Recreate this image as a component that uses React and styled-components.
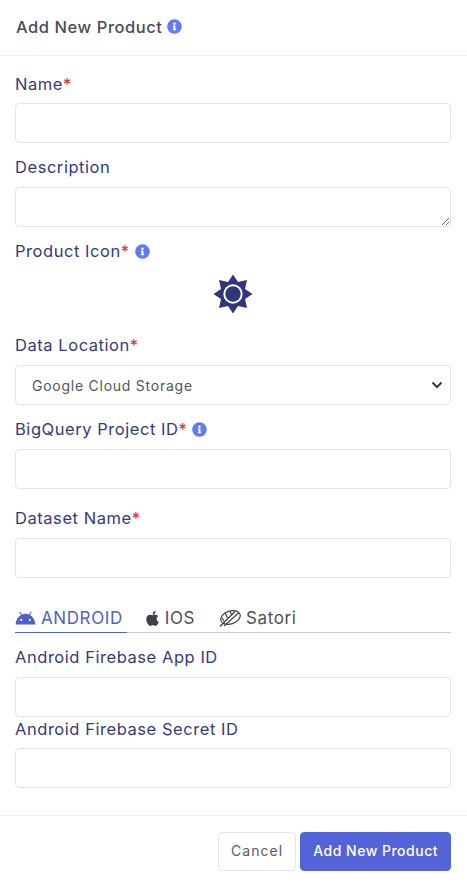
import styled, { createGlobalStyle } from "styled-components";
import { FaApple, FaInfoCircle } from "react-icons/fa";

const chevron =
  "data:image/svg+xml,%3Csvg xmlns='http://www.w3.org/2000/svg' width='12' height='8' viewBox='0 0 12 8'%3E%3Cpath d='M1.500 1.500L6 6l4.500-4.500' fill='none' stroke='%23343a40' stroke-width='2'/%3E%3C/svg%3E";

const GlobalStyle = createGlobalStyle`
  html, body {
    margin: 0;
    padding: 0;
    background: #fff;
  }
  body {
    font-family: Inter, "Open Sans", "Liberation Sans", sans-serif;
  }
  * {
    box-sizing: border-box;
  }
`;

const Modal = styled.div`
  width: 467px;
  height: 886px;
  display: flex;
  flex-direction: column;
  background: #fff;
  overflow: hidden;
`;

const Header = styled.header`
  height: 56px;
  flex: none;
  padding: 0 16px 2px;
  display: flex;
  align-items: center;
  gap: 5px;
  border-bottom: 1px solid #eeeff1;
`;

const Title = styled.h5`
  margin: 0;
  font-size: 16.5px;
  font-weight: 500;
  letter-spacing: 0.55px;
  color: #4b4b57;
`;

const Info = styled(FaInfoCircle)`
  width: 15px;
  height: 15px;
  color: #5f7cf0;
  flex: none;
`;

const Body = styled.div`
  flex: 1;
  padding: 17px 16px 0 15px;
`;

const Field = styled.div`
  margin-bottom: ${(p) => p.$gap ?? 13}px;
`;

const Label = styled.label`
  height: 22px;
  margin-bottom: ${(p) => p.$gap ?? 8}px;
  display: flex;
  align-items: center;
  gap: 5px;
  font-size: 16.5px;
  letter-spacing: 0.55px;
  color: #363a7d;
  white-space: nowrap;
`;

const Required = styled.span`
  color: #f0233b;
  margin-left: -5px;
`;

const Input = styled.input`
  display: block;
  width: 100%;
  height: 40px;
  border: 1px solid #e4e5e8;
  border-radius: 4px;
  background: #fff;
  outline: none;
`;

const TextArea = styled.textarea`
  display: block;
  width: 100%;
  height: 40px;
  border: 1px solid #e4e5e8;
  border-radius: 4px;
  background: #fff;
  outline: none;
`;

const Select = styled.select`
  display: block;
  width: 100%;
  height: 40px;
  padding-left: 16px;
  border: 1px solid #e4e5e8;
  border-radius: 4px;
  appearance: none;
  background: #fff url("${chevron}") no-repeat right 7px center;
  font-family: inherit;
  font-size: 14px;
  letter-spacing: 0.75px;
  color: #55555f;
  outline: none;
`;

const IconRow = styled.div`
  height: 40px;
  margin: 12px 0 20px;
  display: flex;
  justify-content: center;
  align-items: center;
`;

const Tabs = styled.div`
  display: flex;
  height: 30px;
  margin-bottom: 13px;
  border-bottom: 1px solid #c9cbd1;
`;

const Tab = styled.div`
  height: 30px;
  padding-right: ${(p) => p.$pad}px;
  margin-right: ${(p) => p.$space}px;
  display: flex;
  align-items: center;
  gap: ${(p) => p.$gap ?? 5}px;
  font-size: 17px;
  letter-spacing: 0.6px;
  color: ${(p) => (p.$active ? "#4f62c9" : "#4f4f58")};
  border-bottom: ${(p) => (p.$active ? "1px solid #4f62c9" : "none")};
`;

const Footer = styled.footer`
  height: 71px;
  flex: none;
  padding: 16px 16px 0;
  display: flex;
  justify-content: flex-end;
  align-items: flex-start;
  gap: 4px;
  border-top: 1px solid #eeeff1;
`;

const Button = styled.button`
  height: 39px;
  padding: 0 12px 2px;
  border-radius: 4px;
  border: 1px solid ${(p) => (p.$primary ? "#5563d8" : "#e4e5e8")};
  background: ${(p) => (p.$primary ? "#5563d8" : "#fff")};
  color: ${(p) => (p.$primary ? "#fff" : "#5a5a64")};
  font-family: inherit;
  font-size: 14px;
  letter-spacing: ${(p) => (p.$primary ? 0.5 : 1.05)}px;
  font-weight: ${(p) => (p.$primary ? 500 : 400)};
`;

const SunIcon = () => (
  <svg width="40" height="40" viewBox="0 0 40 40" aria-hidden="true">
    <polygon
      fill="#2f3779"
      points="20,0.5 25,8 34,6 32,15 39.5,20 32,25 34,34 25,32 20,39.5 15,32 6,34 8,25 0.5,20 8,15 6,6 15,8"
    />
    <circle cx="20" cy="20" r="9.7" fill="#fff" />
    <circle cx="20" cy="20" r="7.7" fill="#2f3779" />
  </svg>
);

const AndroidIcon = () => (
  <svg width="21" height="14" viewBox="0 0 21 14" aria-hidden="true">
    <path
      fill="#4f62c9"
      d="M0.5 13.5C1 8.6 3.2 5.4 6 3.9L4.3 1l.8-.5 1.8 3c1.1-.5 2.3-.7 3.6-.7s2.5.2 3.6.7l1.8-3 .8.5L15 3.9c2.8 1.5 5 4.7 5.5 9.6z"
    />
    <circle cx="6.2" cy="9" r="1.1" fill="#fff" />
    <circle cx="14.8" cy="9" r="1.1" fill="#fff" />
  </svg>
);

const SatoriIcon = () => (
  <svg width="22" height="20" viewBox="0 0 22 20" fill="none" stroke="#3f3f48" strokeWidth="1.2" aria-hidden="true">
    <ellipse cx="11.5" cy="9.5" rx="10" ry="6.5" transform="rotate(-18 11.500 9.500)" />
    <path d="M1 18.500L16 3.500M5 18L19.500 5" />
    <path d="M6 5l2.500 5M11 3.500l2 4M3 10l2 3" />
  </svg>
);

export default function App() {
  return (
    <>
      <GlobalStyle />
      <Modal>
        <Header>
          <Title>Add New Product</Title>
          <Info />
        </Header>
        <Body>
          <Field $gap={13}>
            <Label>
              Name<Required>*</Required>
            </Label>
            <Input />
          </Field>
          <Field $gap={13}>
            <Label $gap={9}>Description</Label>
            <TextArea />
          </Field>
          <Label>
            Product Icon<Required>*</Required>
            <Info />
          </Label>
          <IconRow>
            <SunIcon />
          </IconRow>
          <Field $gap={13}>
            <Label $gap={9}>
              Data Location<Required>*</Required>
            </Label>
            <Select defaultValue="gcs">
              <option value="gcs">Google Cloud Storage</option>
            </Select>
          </Field>
          <Field $gap={18}>
            <Label $gap={9}>
              BigQuery Project ID<Required>*</Required>
              <Info />
            </Label>
            <Input />
          </Field>
          <Field $gap={25}>
            <Label $gap={9}>
              Dataset Name<Required>*</Required>
            </Label>
            <Input />
          </Field>
          <Tabs>
            <Tab $active $pad={4} $space={17}>
              <AndroidIcon />
              ANDROID
            </Tab>
            <Tab $pad={0} $space={24} $gap={4}>
              <FaApple size={17} color="#3f3f48" />
              IOS
            </Tab>
            <Tab $pad={0} $space={0}>
              <SatoriIcon />
              Satori
            </Tab>
          </Tabs>
          <Field $gap={1}>
            <Label $gap={9}>Android Firebase App ID</Label>
            <Input />
          </Field>
          <Field $gap={0}>
            <Label>Android Firebase Secret ID</Label>
            <Input />
          </Field>
        </Body>
        <Footer>
          <Button>Cancel</Button>
          <Button $primary>Add New Product</Button>
        </Footer>
      </Modal>
    </>
  );
}
